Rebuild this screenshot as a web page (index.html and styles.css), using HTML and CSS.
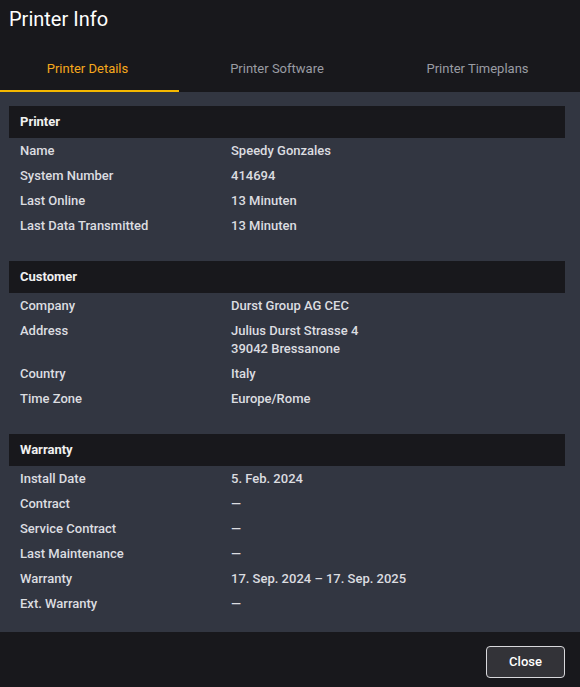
FILE: index.html
```html
<!DOCTYPE html>
<html>
<head>
<meta charset="utf-8">
<link rel="stylesheet" href="styles.css">
</head>
<body>
<div class="dialog">
  <div class="title">Printer Info</div>
  <div class="tabs">
    <div class="tab active">Printer Details</div>
    <div class="tab">Printer Software</div>
    <div class="tab">Printer Timeplans</div>
  </div>
  <div class="content">
    <div class="section">
      <div class="section-head">Printer</div>
      <div class="row"><div class="label">Name</div><div class="value">Speedy Gonzales</div></div>
      <div class="row"><div class="label">System Number</div><div class="value">414694</div></div>
      <div class="row"><div class="label">Last Online</div><div class="value">13 Minuten</div></div>
      <div class="row"><div class="label">Last Data Transmitted</div><div class="value">13 Minuten</div></div>
    </div>
    <div class="section">
      <div class="section-head">Customer</div>
      <div class="row"><div class="label">Company</div><div class="value">Durst Group AG CEC</div></div>
      <div class="row"><div class="label">Address</div><div class="value">Julius Durst Strasse 4<br>39042 Bressanone</div></div>
      <div class="row"><div class="label">Country</div><div class="value">Italy</div></div>
      <div class="row"><div class="label">Time Zone</div><div class="value">Europe/Rome</div></div>
    </div>
    <div class="section">
      <div class="section-head">Warranty</div>
      <div class="row"><div class="label">Install Date</div><div class="value">5. Feb. 2024</div></div>
      <div class="row"><div class="label">Contract</div><div class="value">—</div></div>
      <div class="row"><div class="label">Service Contract</div><div class="value">—</div></div>
      <div class="row"><div class="label">Last Maintenance</div><div class="value">—</div></div>
      <div class="row"><div class="label">Warranty</div><div class="value">17. Sep. 2024 – 17. Sep. 2025</div></div>
      <div class="row"><div class="label">Ext. Warranty</div><div class="value">—</div></div>
    </div>
  </div>
  <div class="footer">
    <button class="btn">Close</button>
  </div>
</div>
</body>
</html>
```
FILE: styles.css
```css
* { box-sizing: border-box; }
html, body {
  margin: 0;
  padding: 0;
  background: #18181c;
}
body {
  font-family: Roboto, "Liberation Sans", sans-serif;
  font-size: 13px;
  font-weight: 500;
  color: #dcdde0;
  width: 580px;
  height: 687px;
  overflow: hidden;
}
.dialog {
  display: flex;
  flex-direction: column;
  height: 687px;
}
.title {
  font-size: 20px;
  font-weight: 400;
  color: #ffffff;
  padding: 6px 9px 0;
  height: 45px;
  line-height: 26px;
}
.tabs {
  display: grid;
  grid-template-columns: 179fr 196fr 205fr;
  height: 47px;
}
.tab {
  text-align: center;
  font-size: 13px;
  font-weight: 400;
  color: #9a9ca3;
  line-height: 18px;
  padding-top: 15px;
  border-bottom: 2px solid transparent;
}
.tab.active {
  color: #f5a81c;
  border-bottom-color: #f5b800;
  padding-right: 4px;
}
.content {
  background: #323641;
  padding: 14px 15px 16px 9px;
  display: flex;
  flex-direction: column;
  gap: 23px;
}
.section-head {
  background: #18181c;
  height: 32px;
  line-height: 32px;
  padding-left: 11px;
  font-weight: 700;
  color: #f0f0f0;
}
.row {
  display: flex;
  padding: 3.5px 0 3.5px 11px;
  line-height: 18px;
}
.label {
  width: 211px;
  flex: none;
}
.value {
  flex: 1;
}
.footer {
  flex: 1;
  display: flex;
  justify-content: flex-end;
  align-items: center;
  padding-right: 15px;
  padding-top: 4px;
}
.btn {
  width: 79px;
  height: 32px;
  background: #333338;
  border: 1px solid #d8d8dc;
  border-radius: 4px;
  color: #ffffff;
  font-family: Roboto, "Liberation Sans", sans-serif;
  font-size: 13px;
  font-weight: 500;
}
```
